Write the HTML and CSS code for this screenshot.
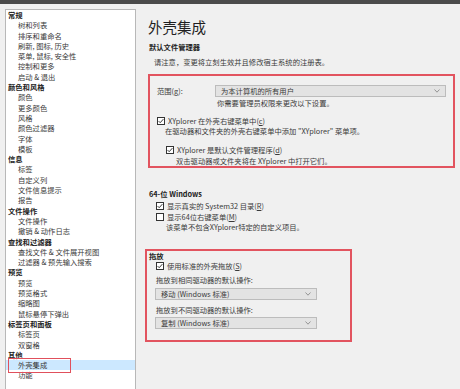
FILE: index.html
```html
<!DOCTYPE html>
<html lang="zh-CN">
<head>
  <meta charset="UTF-8">
  <meta name="viewport" content="width=device-width, initial-scale=1.0">
  <title>外壳集成</title>
  <link rel="stylesheet" href="styles.css">
</head>
<body>
  <div class="topbar"></div>
  <div class="main">
    <ul class="tree">
      <li class="cat">常规</li>
      <li class="sub">树和列表</li>
      <li class="sub">排序和重命名</li>
      <li class="sub">刷新, 图标, 历史</li>
      <li class="sub">菜单, 鼠标, 安全性</li>
      <li class="sub">控制和更多</li>
      <li class="sub">启动 &amp; 退出</li>
      <li class="cat">颜色和风格</li>
      <li class="sub">颜色</li>
      <li class="sub">更多颜色</li>
      <li class="sub">风格</li>
      <li class="sub">颜色过滤器</li>
      <li class="sub">字体</li>
      <li class="sub">模板</li>
      <li class="cat">信息</li>
      <li class="sub">标签</li>
      <li class="sub">自定义列</li>
      <li class="sub">文件信息提示</li>
      <li class="sub">报告</li>
      <li class="cat">文件操作</li>
      <li class="sub">文件操作</li>
      <li class="sub">撤销 &amp; 动作日志</li>
      <li class="cat">查找和过滤器</li>
      <li class="sub">查找文件 &amp; 文件展开视图</li>
      <li class="sub">过滤器 &amp; 预先输入搜索</li>
      <li class="cat">预览</li>
      <li class="sub">预览</li>
      <li class="sub">预览格式</li>
      <li class="sub">缩略图</li>
      <li class="sub">鼠标悬停下弹出</li>
      <li class="cat">标签页和面板</li>
      <li class="sub">标签页</li>
      <li class="sub">双窗格</li>
      <li class="cat">其他</li>
      <li class="sub selected">外壳集成</li>
      <li class="sub">功能</li>
    </ul>

    <div class="content">
      <h1>外壳集成</h1>

      <div class="heading">默认文件管理器</div>
      <div class="line note">请注意，变更将立刻生效并且修改宿主系统的注册表。</div>

      <div class="mark-box first">
        <div class="scope-row">
          <span class="scope-label">范围(<u>g</u>):</span>
          <div class="select wide">
            <span>为本计算机的所有用户</span>
            <svg class="chev" width="6" height="4" viewBox="0 0 6 4"><polyline points="0.5,0.5 3,3.2 5.5,0.5" fill="none" stroke="#808080" stroke-width="0.8"/></svg>
          </div>
        </div>
        <div class="line admin">你需要管理员权限来更改以下设置。</div>

        <div class="check cb-menu">
          <svg width="8" height="8" viewBox="0 0 8 8"><rect x="0.5" y="0.5" width="7" height="7" fill="#fff" stroke="#333"/><polyline points="1.6,4.1 3.2,5.7 6.4,2.1" fill="none" stroke="#222" stroke-width="0.9"/></svg>
          <span>XYplorer 在外壳右键菜单中(<u>c</u>)</span>
        </div>
        <div class="line desc">在驱动器和文件夹的外壳右键菜单中添加 "XYplorer" 菜单项。</div>

        <div class="check cb-default">
          <svg width="8" height="8" viewBox="0 0 8 8"><rect x="0.5" y="0.5" width="7" height="7" fill="#fff" stroke="#333"/><polyline points="1.6,4.1 3.2,5.7 6.4,2.1" fill="none" stroke="#222" stroke-width="0.9"/></svg>
          <span>XYplorer 是默认文件管理程序(<u>d</u>)</span>
        </div>
        <div class="line desc2">双击驱动器或文件夹将在 XYplorer 中打开它们。</div>
      </div>

      <div class="heading win64">64-位 Windows</div>
      <div class="check cb-sys">
        <svg width="8" height="8" viewBox="0 0 8 8"><rect x="0.5" y="0.5" width="7" height="7" fill="#fff" stroke="#333"/><polyline points="1.6,4.1 3.2,5.7 6.4,2.1" fill="none" stroke="#222" stroke-width="0.9"/></svg>
        <span>显示真实的 System32 目录(<u>R</u>)</span>
      </div>
      <div class="check cb-64">
        <svg width="8" height="8" viewBox="0 0 8 8"><rect x="0.5" y="0.5" width="7" height="7" fill="#fff" stroke="#333"/></svg>
        <span>显示64位右键菜单(<u>M</u>)</span>
      </div>
      <div class="line desc">该菜单不包含XYplorer特定的自定义项目。</div>

      <div class="mark-box second">
        <div class="heading drop-title">拖放</div>
        <div class="check cb-drag">
          <svg width="8" height="8" viewBox="0 0 8 8"><rect x="0.5" y="0.5" width="7" height="7" fill="#fff" stroke="#333"/><polyline points="1.6,4.1 3.2,5.7 6.4,2.1" fill="none" stroke="#222" stroke-width="0.9"/></svg>
          <span>使用标准的外壳拖放(<u>S</u>)</span>
        </div>
        <div class="line drop-label first-label">拖放到相同驱动器的默认操作:</div>
        <div class="select narrow first-select">
          <span>移动 (Windows 标准)</span>
          <svg class="chev" width="6" height="4" viewBox="0 0 6 4"><polyline points="0.5,0.5 3,3.2 5.5,0.5" fill="none" stroke="#808080" stroke-width="0.8"/></svg>
        </div>
        <div class="line drop-label second-label">拖放到不同驱动器的默认操作:</div>
        <div class="select narrow second-select">
          <span>复制 (Windows 标准)</span>
          <svg class="chev" width="6" height="4" viewBox="0 0 6 4"><polyline points="0.5,0.5 3,3.2 5.5,0.5" fill="none" stroke="#808080" stroke-width="0.8"/></svg>
        </div>
      </div>
    </div>
  </div>
</body>
</html>
```

FILE: styles.css
```css
* {
  box-sizing: border-box;
}

body {
  margin: 0;
  height: 100vh;
  overflow: hidden;
  display: flex;
  flex-direction: column;
  background-color: #f0f0f0;
  font-family: 'Noto Sans CJK SC', 'Noto Sans', sans-serif;
  font-size: 7.3px;
  color: #3a3a3a;
}

.topbar {
  height: 4px;
  flex-shrink: 0;
  background-color: #4b4b4b;
}

.main {
  flex: 1;
  display: flex;
  min-height: 0;
}

/* Left tree */
.tree {
  width: 131px;
  flex-shrink: 0;
  margin: 5px 0 0 5px;
  padding: 0;
  list-style: none;
  background-color: #fff;
  border: 1px solid #b8b8b8;
  border-bottom: none;
  overflow: hidden;
}

.tree li {
  height: 10.3px;
  line-height: 10.3px;
  white-space: nowrap;
}

.tree .cat {
  padding-left: 2px;
  font-weight: bold;
  color: #222;
}

.tree .sub {
  padding-left: 12px;
}

.tree .selected {
  position: relative;
  background-color: #cce8ff;
}

.tree .selected::after {
  content: "";
  position: absolute;
  left: 2px;
  top: -2px;
  width: 61px;
  height: 13px;
  border: 1.5px solid #e0505c;
}

/* Right content */
.content {
  flex: 1;
  padding: 14px 5px 0 12px;
}

h1 {
  margin: 0;
  font-size: 14.5px;
  line-height: 18px;
  font-weight: normal;
  color: #1f1f1f;
}

.heading {
  height: 10px;
  line-height: 10px;
  margin-top: 6px;
  padding-left: 1px;
  font-weight: bold;
  color: #222;
}

.line {
  height: 10px;
  line-height: 10px;
  white-space: nowrap;
}

.note {
  margin: 5px 0 0 6px;
}

.mark-box {
  border: 2px solid #e2545f;
}

.mark-box.first {
  margin-top: 7px;
  height: 94px;
  padding: 9px 7px 0 7px;
}

.scope-row {
  display: flex;
  align-items: center;
  height: 12px;
}

.scope-label {
  width: 58px;
  flex-shrink: 0;
}

.select {
  height: 12px;
  display: flex;
  align-items: center;
  justify-content: space-between;
  padding: 0 5px;
  background-color: #e3e3e3;
  border: 1px solid #bcbcbc;
  white-space: nowrap;
}

.wide {
  flex: 1;
}

.chev {
  flex-shrink: 0;
}

.admin {
  margin: 1px 0 0 60px;
}

.check {
  display: flex;
  align-items: center;
  gap: 3px;
  height: 10px;
  white-space: nowrap;
}

.check svg {
  flex-shrink: 0;
}

.cb-menu {
  margin-top: 8px;
}

.desc {
  padding-left: 10px;
}

.mark-box .desc {
  padding-left: 8px;
}

.cb-default {
  margin: 9px 0 0 9px;
}

.desc2 {
  margin-top: 1px;
  padding-left: 19px;
}

.win64 {
  margin-top: 21px;
}

.cb-sys {
  margin-top: 2px;
  padding-left: 8px;
}

.cb-64 {
  margin-top: 1px;
  padding-left: 8px;
}

.content > .desc {
  padding-left: 18px;
}

.mark-box.second {
  margin: 17px 0 0 -3px;
  width: 207px;
  height: 93px;
  padding: 0 0 0 9px;
}

.drop-title {
  height: 7px;
  line-height: 7px;
  margin: 2px 0 0 -8px;
}

.cb-drag {
  margin-top: 1px;
}

.drop-label {
  margin-top: 4px;
}

.first-select {
  margin-top: 3px;
  width: 162px;
  margin-left: -1px;
}

.second-label {
  margin-top: 5px;
}

.second-select {
  margin-top: 2px;
  width: 162px;
  margin-left: -1px;
}
```
